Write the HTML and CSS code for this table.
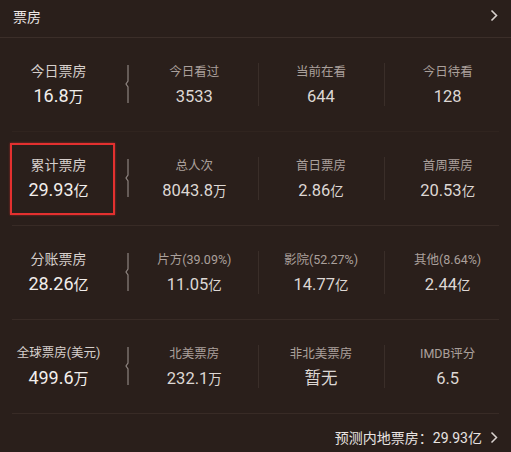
FILE: index.html
```html
<!DOCTYPE html>
<html lang="zh">
<head>
<meta charset="utf-8">
<link rel="stylesheet" href="styles.css">
</head>
<body>
<div class="card">
  <div class="header">
    <span class="title">票房</span>
    <svg class="chev" width="8" height="13" viewBox="0 0 8 13"><path d="M1.5 1.5 L6.5 6.5 L1.5 11.5" fill="none" stroke="#d9d2cf" stroke-width="1.6"/></svg>
  </div>

  <div class="row">
    <div class="main">
      <div class="mlabel">今日票房</div>
      <div class="mvalue">16.8<span class="unit">万</span></div>
    </div>
    <svg class="brace" width="8" height="38" viewBox="0 0 8 38"><path d="M5 0 V16 L3 19 L5 22 V38" fill="none" stroke="#8e8480" stroke-width="1.2"/></svg>
    <div class="stats">
      <div class="stat"><div class="slabel">今日看过</div><div class="svalue">3533</div></div>
      <div class="stat"><div class="slabel">当前在看</div><div class="svalue">644</div></div>
      <div class="stat"><div class="slabel">今日待看</div><div class="svalue">128</div></div>
    </div>
  </div>

  <div class="row">
    <div class="main">
      <div class="mlabel">累计票房</div>
      <div class="mvalue">29.93<span class="unit">亿</span></div>
      <div class="mark"></div>
    </div>
    <svg class="brace" width="8" height="38" viewBox="0 0 8 38"><path d="M5 0 V16 L3 19 L5 22 V38" fill="none" stroke="#8e8480" stroke-width="1.2"/></svg>
    <div class="stats">
      <div class="stat"><div class="slabel">总人次</div><div class="svalue">8043.8<span class="sunit">万</span></div></div>
      <div class="stat"><div class="slabel">首日票房</div><div class="svalue">2.86<span class="sunit">亿</span></div></div>
      <div class="stat"><div class="slabel">首周票房</div><div class="svalue">20.53<span class="sunit">亿</span></div></div>
    </div>
  </div>

  <div class="row">
    <div class="main">
      <div class="mlabel">分账票房</div>
      <div class="mvalue">28.26<span class="unit">亿</span></div>
    </div>
    <svg class="brace" width="8" height="38" viewBox="0 0 8 38"><path d="M5 0 V16 L3 19 L5 22 V38" fill="none" stroke="#8e8480" stroke-width="1.2"/></svg>
    <div class="stats">
      <div class="stat"><div class="slabel">片方(39.09%)</div><div class="svalue">11.05<span class="sunit">亿</span></div></div>
      <div class="stat"><div class="slabel">影院(52.27%)</div><div class="svalue">14.77<span class="sunit">亿</span></div></div>
      <div class="stat"><div class="slabel">其他(8.64%)</div><div class="svalue">2.44<span class="sunit">亿</span></div></div>
    </div>
  </div>

  <div class="row">
    <div class="main">
      <div class="mlabel small">全球票房(美元)</div>
      <div class="mvalue">499.6<span class="unit">万</span></div>
    </div>
    <svg class="brace" width="8" height="38" viewBox="0 0 8 38"><path d="M5 0 V16 L3 19 L5 22 V38" fill="none" stroke="#8e8480" stroke-width="1.2"/></svg>
    <div class="stats">
      <div class="stat"><div class="slabel">北美票房</div><div class="svalue">232.1<span class="sunit">万</span></div></div>
      <div class="stat"><div class="slabel">非北美票房</div><div class="svalue">暂无</div></div>
      <div class="stat"><div class="slabel">IMDB评分</div><div class="svalue">6.5</div></div>
    </div>
  </div>

  <div class="footer">
    <span class="ftext">预测内地票房：29.93亿</span>
    <svg class="fchev" width="8" height="13" viewBox="0 0 8 13"><path d="M1.5 1.5 L6.5 6.5 L1.5 11.5" fill="none" stroke="#d9d2cf" stroke-width="1.5"/></svg>
  </div>
</div>
</body>
</html>
```
FILE: styles.css
```css
* { box-sizing: border-box; }
html, body { margin: 0; padding: 0; }
body {
  background: #2a1f1b;
  font-family: Roboto, "Noto Sans CJK SC", sans-serif;
  color: #e8e3e1;
  width: 511px;
  height: 452px;
  overflow: hidden;
}
.card { display: flex; flex-direction: column; }
.header {
  height: 38px;
  display: flex;
  align-items: center;
  justify-content: space-between;
  padding: 0 13px 6px 13px;
  border-bottom: 1px solid #3b2e29;
}
.title { font-size: 14px; color: #ece7e5; }
.chev { display: block; }
.row {
  height: 94px;
  display: flex;
  align-items: center;
  margin: 0 12px;
  border-bottom: 1px solid #382b26;
  padding-bottom: 1px;
}
.row:nth-child(2) { border-bottom-color: #30241f; }
.main {
  position: relative;
  width: 111px;
  margin-left: -12px;
  display: flex;
  flex-direction: column;
  align-items: center;
  padding-left: 6px;
  align-self: stretch;
  justify-content: center;
}
.mlabel { font-size: 14px; line-height: 20px; color: #d6cfcc; }
.mlabel.small { font-size: 12.5px; }
.mvalue { font-size: 18px; line-height: 22px; margin-top: 4px; color: #f2eeec; }
.unit { font-size: 15px; }
.mark {
  position: absolute;
  left: 10px;
  top: 11px;
  width: 105px;
  height: 72px;
  border: 2.5px solid #e3302f;
  box-shadow: 0 0 2px rgba(227, 48, 47, 0.6);
}
.brace { display: block; flex: none; margin-left: 12px; }
.stats {
  flex: 1;
  display: grid;
  grid-template-columns: 1fr 1fr 1fr;
  margin-right: -12px;
  align-self: stretch;
  align-items: center;
}
.stat {
  position: relative;
  display: flex;
  flex-direction: column;
  align-items: center;
  justify-content: center;
  padding-top: 1px;
}
.stat + .stat::before {
  content: "";
  position: absolute;
  left: 0;
  top: 2px;
  bottom: 2px;
  border-left: 1px solid #3a2e29;
}
.slabel { font-size: 12.5px; line-height: 20px; color: #aaa09b; white-space: nowrap; }
.svalue { font-size: 16.5px; line-height: 22px; margin-top: 4px; color: #ddd7d4; }
.sunit { font-size: 13.5px; }
.footer {
  height: 38px;
  display: flex;
  align-items: center;
  justify-content: flex-end;
  padding: 8px 13px 0 0;
  gap: 8px;
}
.ftext { font-size: 14px; color: #e8e3e1; }
.fchev { display: block; }
```
